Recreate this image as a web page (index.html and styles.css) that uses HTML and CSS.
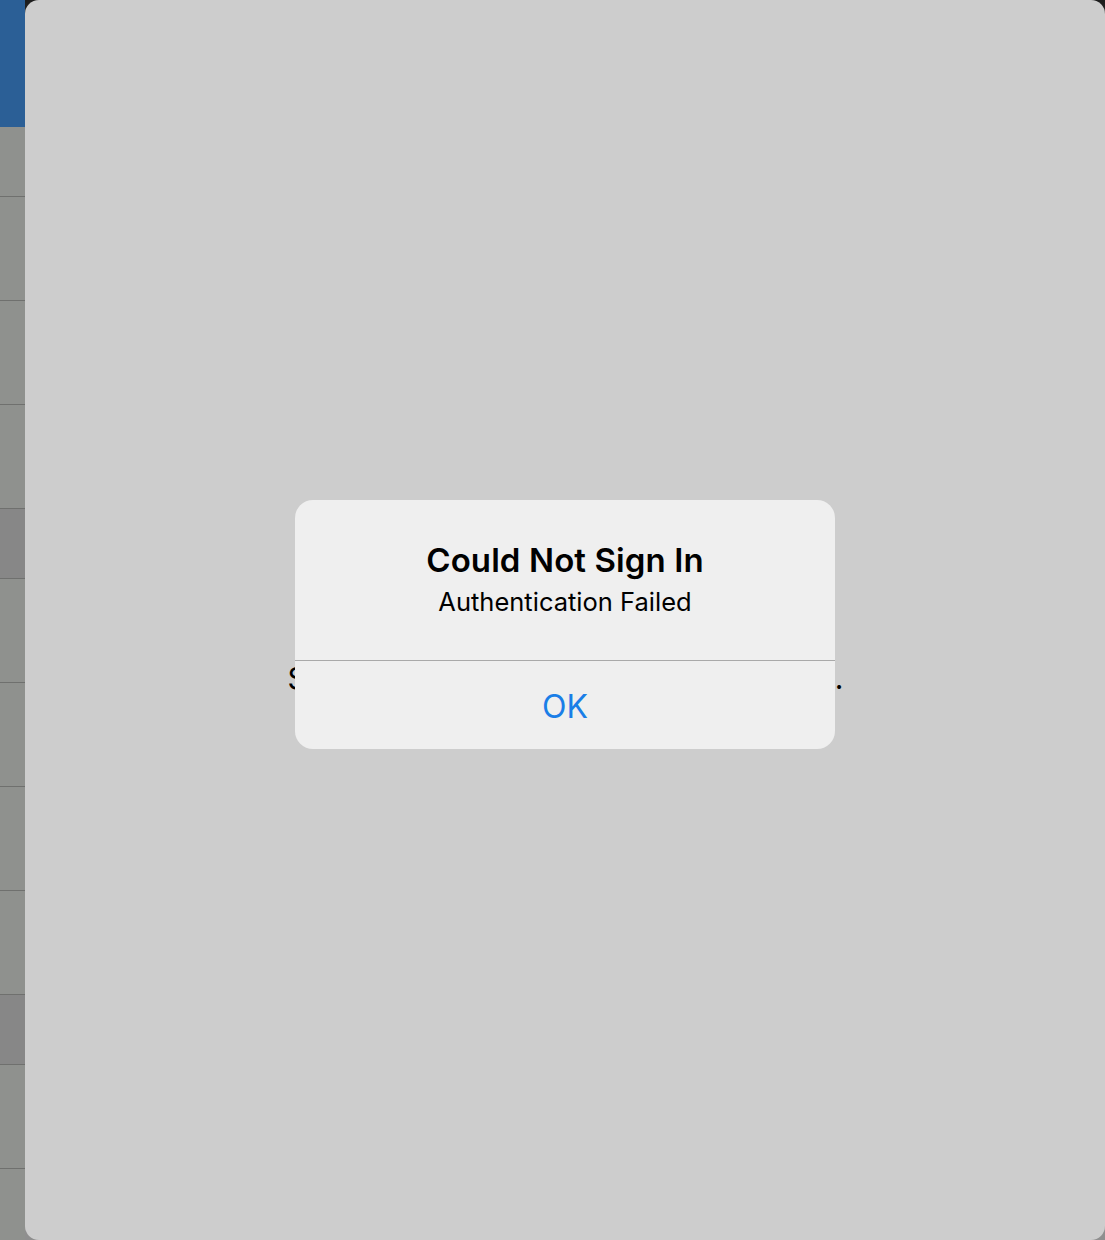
FILE: index.html
```html
<!DOCTYPE html>
<html>
<head>
<meta charset="utf-8">
<link rel="stylesheet" href="styles.css">
</head>
<body>
<div class="screen">
  <div class="side">
    <div class="side-top"></div>
    <div class="row short"></div>
    <div class="row"></div>
    <div class="row"></div>
    <div class="row"></div>
    <div class="row short dark"></div>
    <div class="row"></div>
    <div class="row"></div>
    <div class="row"></div>
    <div class="row"></div>
    <div class="row short dark"></div>
    <div class="row"></div>
    <div class="row last"></div>
  </div>
  <div class="sheet">
    <div class="behind"><span>S</span><span>.</span></div>
    <div class="alert">
      <div class="alert-body">
        <h1 class="alert-title">Could Not Sign In</h1>
        <p class="alert-msg">Authentication Failed</p>
      </div>
      <div class="alert-btn">OK</div>
    </div>
  </div>
</div>
</body>
</html>
```
FILE: styles.css
```css
html, body {
  margin: 0;
  padding: 0;
}
body {
  width: 1105px;
  height: 1240px;
  overflow: hidden;
  background: linear-gradient(180deg, #1c1c1c 0px, #3a3a3a 40px, #8a8a8a 200px, #8f8f8f 100%);
  font-family: Inter, "Open Sans", "Liberation Sans", sans-serif;
}
.screen {
  display: flex;
  height: 1240px;
}
.side {
  width: 25px;
  flex: none;
  display: flex;
  flex-direction: column;
  background: #8f918e;
}
.side-top {
  height: 127px;
  background: #2b5f96;
}
.row {
  height: 103px;
  border-bottom: 1px solid #6f706e;
  background: #8f918e;
}
.row.short {
  height: 69px;
}
.row.dark {
  background: #878787;
}
.row.last {
  border-bottom: none;
  flex: 1;
}
.sheet {
  flex: 1;
  position: relative;
  background: #cdcdcd;
  border-radius: 14px;
  display: flex;
  flex-direction: column;
  align-items: center;
}
.behind {
  margin: 658px 0 0 1px;
  width: 556px;
  display: flex;
  justify-content: space-between;
  font-size: 30px;
  line-height: 40px;
  color: #000;
}
.alert {
  position: absolute;
  left: 270px;
  top: 500px;
  width: 540px;
  height: 249px;
  background: #efefef;
  border-radius: 18px;
  display: flex;
  flex-direction: column;
  overflow: hidden;
}
.alert-body {
  height: 161px;
  box-sizing: border-box;
  border-bottom: 1px solid #a9a9a9;
  display: flex;
  flex-direction: column;
  align-items: center;
  padding-top: 40px;
}
.alert-title {
  margin: 0;
  font-size: 33px;
  font-weight: 600;
  line-height: 40px;
  color: #000;
  letter-spacing: 0.1px;
}
.alert-msg {
  margin: 7px 0 0;
  font-size: 25.5px;
  line-height: 30px;
  color: #000;
}
.alert-btn {
  flex: 1;
  display: flex;
  align-items: center;
  justify-content: center;
  font-size: 32px;
  color: #1a7ee7;
  padding-top: 2px;
}
```
